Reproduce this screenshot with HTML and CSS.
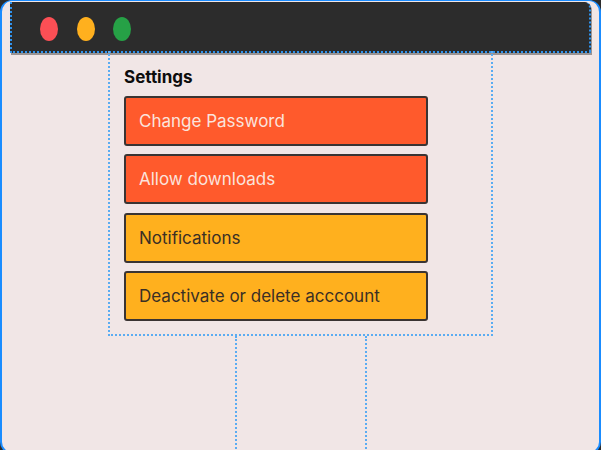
FILE: index.html
```html
<!DOCTYPE html>
<html>
<head>
<meta charset="utf-8">
<link rel="stylesheet" href="styles.css">
</head>
<body>
<div class="window">
  <div class="titlebar">
    <span class="light red"></span>
    <span class="light yellow"></span>
    <span class="light green"></span>
  </div>
  <div class="panel">
    <div class="heading">Settings</div>
    <div class="list">
      <div class="item orange">Change Password</div>
      <div class="item orange">Allow downloads</div>
      <div class="item amber">Notifications</div>
      <div class="item amber">Deactivate or delete acccount</div>
    </div>
  </div>
  <div class="stem"></div>
</div>
</body>
</html>
```

FILE: styles.css
```css
html, body {
  margin: 0;
  padding: 0;
  background: #2c2c2c;
}
body {
  width: 601px;
  height: 450px;
  overflow: hidden;
  font-family: Inter, "Noto Sans", sans-serif;
}
.window {
  box-sizing: border-box;
  width: 601px;
  height: 454px;
  background: #f1e6e6;
  border: 2px solid #1a8cff;
  border-top-width: 1px;
  border-radius: 12px;
  display: flex;
  flex-direction: column;
  overflow: hidden;
}
.titlebar {
  box-sizing: border-box;
  margin: 1px 8px 0;
  height: 51px;
  background: #2c2c2c;
  border: 2px dotted #2f93ee;
  border-top: none;
  border-top-right-radius: 6px;
  box-shadow: 1px 2px 0 #9a9494;
  display: flex;
  align-items: center;
  gap: 18.5px;
  padding: 4px 0 0 28px;
  flex-shrink: 0;
}
.light {
  width: 18px;
  height: 24px;
  border-radius: 50%;
}
.red { background: #fc4f55; }
.yellow { background: #ffb01e; }
.green { background: #26a146; }
.panel {
  box-sizing: border-box;
  width: 385px;
  margin: -2px auto 0;
  border: 2px dotted #5aacf2;
  border-top: none;
  padding: 16px 0 13px 14px;
  flex-shrink: 0;
}
.heading {
  font-size: 17px;
  font-weight: 700;
  color: #0d0d0d;
  line-height: 21px;
  margin-bottom: 8px;
}
.list {
  display: flex;
  flex-direction: column;
  gap: 8.4px;
}
.item {
  box-sizing: border-box;
  width: 304px;
  height: 50px;
  border: 2px solid #3a3433;
  border-radius: 3px;
  padding-left: 13px;
  display: flex;
  align-items: center;
  font-size: 17px;
}
.orange {
  background: #ff5a2c;
  color: #fbe3dc;
}
.amber {
  background: #ffb01e;
  color: #3a2f25;
}
.stem {
  box-sizing: border-box;
  width: 132px;
  margin: 0 auto;
  flex: 1;
  border-left: 2px dotted #5aacf2;
  border-right: 2px dotted #5aacf2;
}
```
